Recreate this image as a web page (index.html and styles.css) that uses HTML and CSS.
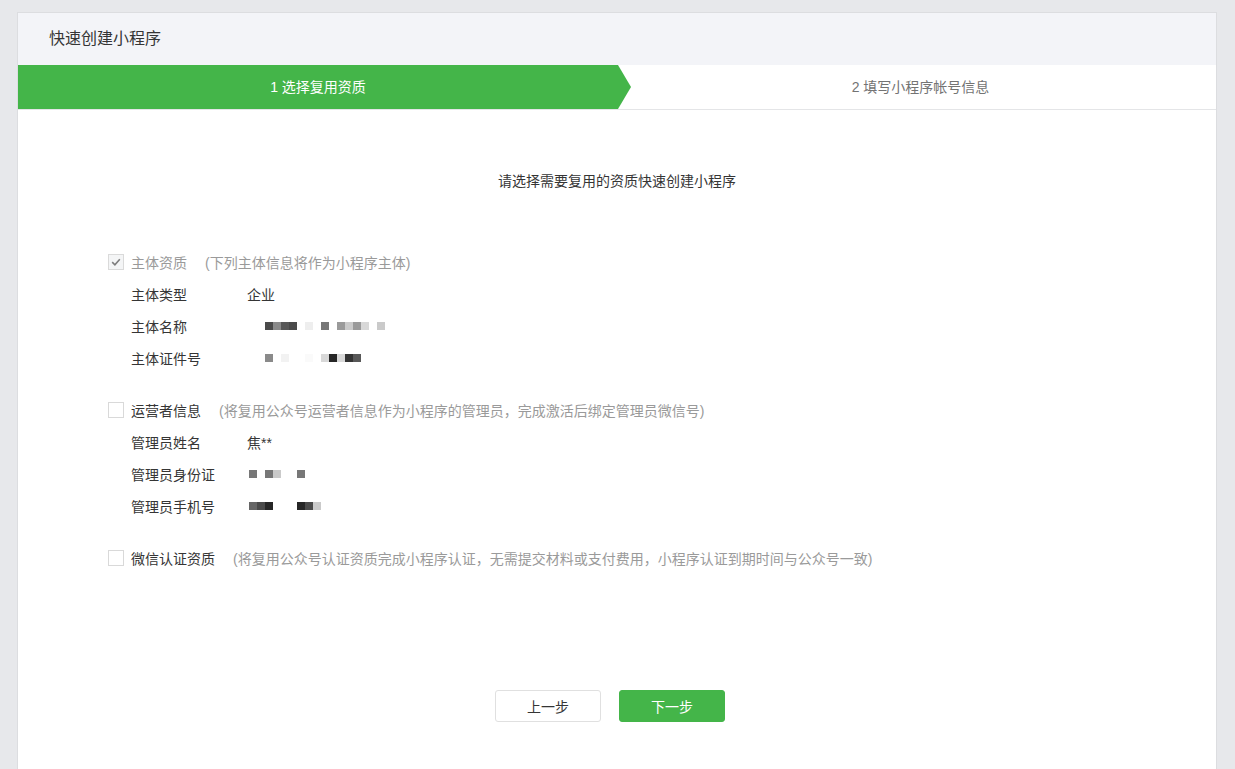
FILE: index.html
```html
<!DOCTYPE html>
<html lang="zh-CN">
<head>
<meta charset="utf-8">
<title>快速创建小程序</title>
<link rel="stylesheet" href="styles.css">
</head>
<body>
<div class="card">
  <div class="card-head">快速创建小程序</div>
  <div class="steps">
    <div class="step step-active">1 选择复用资质</div>
    <div class="step step-next">2 填写小程序帐号信息</div>
  </div>
  <div class="content">
    <div class="intro">请选择需要复用的资质快速创建小程序</div>

    <div class="section">
      <div class="sec-head">
        <span class="cb cb-checked cb-disabled"><svg viewBox="0 0 16 16" width="16" height="16"><path d="M4.2 8.2 L6.9 10.8 L11.8 5.3" fill="none" stroke="#7d7d7d" stroke-width="1.6"/></svg></span>
        <span class="sec-title disabled">主体资质</span>
        <span class="sec-tip">(下列主体信息将作为小程序主体)</span>
      </div>
      <div class="row"><span class="label">主体类型</span><span class="value">企业</span></div>
      <div class="row"><span class="label">主体名称</span><span class="value"><span class="mask off18"><i class="k4"></i><i class="k8"></i><i class="k5"></i><i class="k4"></i><i></i><i class="ke"></i><i></i><i class="k7"></i><i></i><i class="k9"></i><i class="kc"></i><i class="k9"></i><i class="kd"></i><i></i><i class="kc"></i></span></span></div>
      <div class="row"><span class="label">主体证件号</span><span class="value"><span class="mask off18"><i class="k8"></i><i></i><i class="kf"></i><i></i><i></i><i class="kg"></i><i></i><i class="kd"></i><i class="k2"></i><i class="kd"></i><i class="k3"></i><i class="k5"></i></span></span></div>
    </div>

    <div class="section">
      <div class="sec-head">
        <span class="cb"></span>
        <span class="sec-title">运营者信息</span>
        <span class="sec-tip">(将复用公众号运营者信息作为小程序的管理员，完成激活后绑定管理员微信号)</span>
      </div>
      <div class="row"><span class="label">管理员姓名</span><span class="value">焦**</span></div>
      <div class="row"><span class="label">管理员身份证</span><span class="value"><span class="mask off2"><i class="k7"></i><i></i><i class="k7"></i><i class="kc"></i><i></i><i></i><i class="k7"></i></span></span></div>
      <div class="row"><span class="label">管理员手机号</span><span class="value"><span class="mask off2"><i class="k6"></i><i class="k4"></i><i class="k2"></i><i></i><i></i><i></i><i class="k2"></i><i class="k4"></i><i class="kc"></i></span></span></div>
    </div>

    <div class="section">
      <div class="sec-head">
        <span class="cb"></span>
        <span class="sec-title">微信认证资质</span>
        <span class="sec-tip">(将复用公众号认证资质完成小程序认证，无需提交材料或支付费用，小程序认证到期时间与公众号一致)</span>
      </div>
    </div>

    <div class="actions">
      <button class="btn btn-default">上一步</button>
      <button class="btn btn-primary">下一步</button>
    </div>
  </div>
</div>
</body>
</html>
```

FILE: styles.css
```css
* { box-sizing: border-box; }
html, body { margin: 0; padding: 0; }
body {
  background: #e7e8eb;
  padding: 12px 17px 0;
  font-family: "Liberation Sans", "Noto Sans CJK SC", sans-serif;
  font-size: 14px;
  color: #353535;
}
.card {
  width: 1200px;
  min-height: 800px;
  background: #fff;
  border: 1px solid #dcdde0;
  border-bottom: none;
}
.card-head {
  height: 52px;
  line-height: 52px;
  background: #f3f4f8;
  padding-left: 31px;
  font-size: 16px;
  color: #353535;
}
.steps {
  display: flex;
  height: 45px;
  border-bottom: 1px solid #e4e5e7;
}
.step {
  height: 44px;
  line-height: 44px;
  text-align: center;
}
.step-active {
  width: 613px;
  padding-right: 13px;
  background: #44b549;
  color: #fff;
  clip-path: polygon(0 0, 600px 0, 613px 50%, 600px 100%, 0 100%);
}
.step-next {
  flex: 1;
  color: #737373;
  padding-right: 6px;
}
.content {
  padding: 55px 0 0 90px;
}
.intro {
  height: 32px;
  line-height: 32px;
  text-align: center;
  margin: 0 0 49px -90px;
}
.section { margin-bottom: 20px; }
.sec-head {
  display: flex;
  align-items: center;
  height: 32px;
}
.cb {
  width: 16px;
  height: 16px;
  border: 1px solid #d9d9d9;
  background: #fff;
  margin-right: 7px;
  display: flex;
  align-items: center;
  justify-content: center;
}
.cb svg { display: block; margin: -1px; }
.cb-disabled { background: #f4f5f6; border-color: #dadada; }
.sec-title.disabled { color: #9a9a9a; }
.sec-tip { color: #9a9a9a; margin-left: 18px; }
.row {
  display: flex;
  align-items: center;
  height: 32px;
  padding-left: 23px;
}
.section .row:first-of-type { margin-top: -1px; }
.label { width: 116px; }
.value { display: flex; align-items: center; }
.mask { display: flex; }
.mask.off18 { margin-left: 18px; }
.mask.off2 { margin-left: 2px; }
.mask i { display: block; width: 8px; height: 8px; margin-top: -1px; }
.k2 { background: #262626; }
.k3 { background: #333; }
.k4 { background: #4a4a4a; }
.k5 { background: #585858; }
.k6 { background: #666; }
.k7 { background: #777; }
.k8 { background: #8a8a8a; }
.k9 { background: #9a9a9a; }
.kc { background: #cacaca; }
.kd { background: #d8d8d8; }
.ke { background: #eeeeee; }
.kf { background: #f2f2f2; }
.kg { background: #fafafa; }
.actions {
  display: flex;
  justify-content: center;
  gap: 18px;
  margin: 116px 0 0 -104px;
}
.btn {
  width: 106px;
  height: 32px;
  border-radius: 3px;
  font-family: inherit;
  font-size: 14px;
  cursor: pointer;
}
.btn-default {
  background: #fff;
  border: 1px solid #e0e0e0;
  color: #353535;
}
.btn-primary {
  background: #44b549;
  border: 1px solid #44b549;
  color: #fff;
}
```
